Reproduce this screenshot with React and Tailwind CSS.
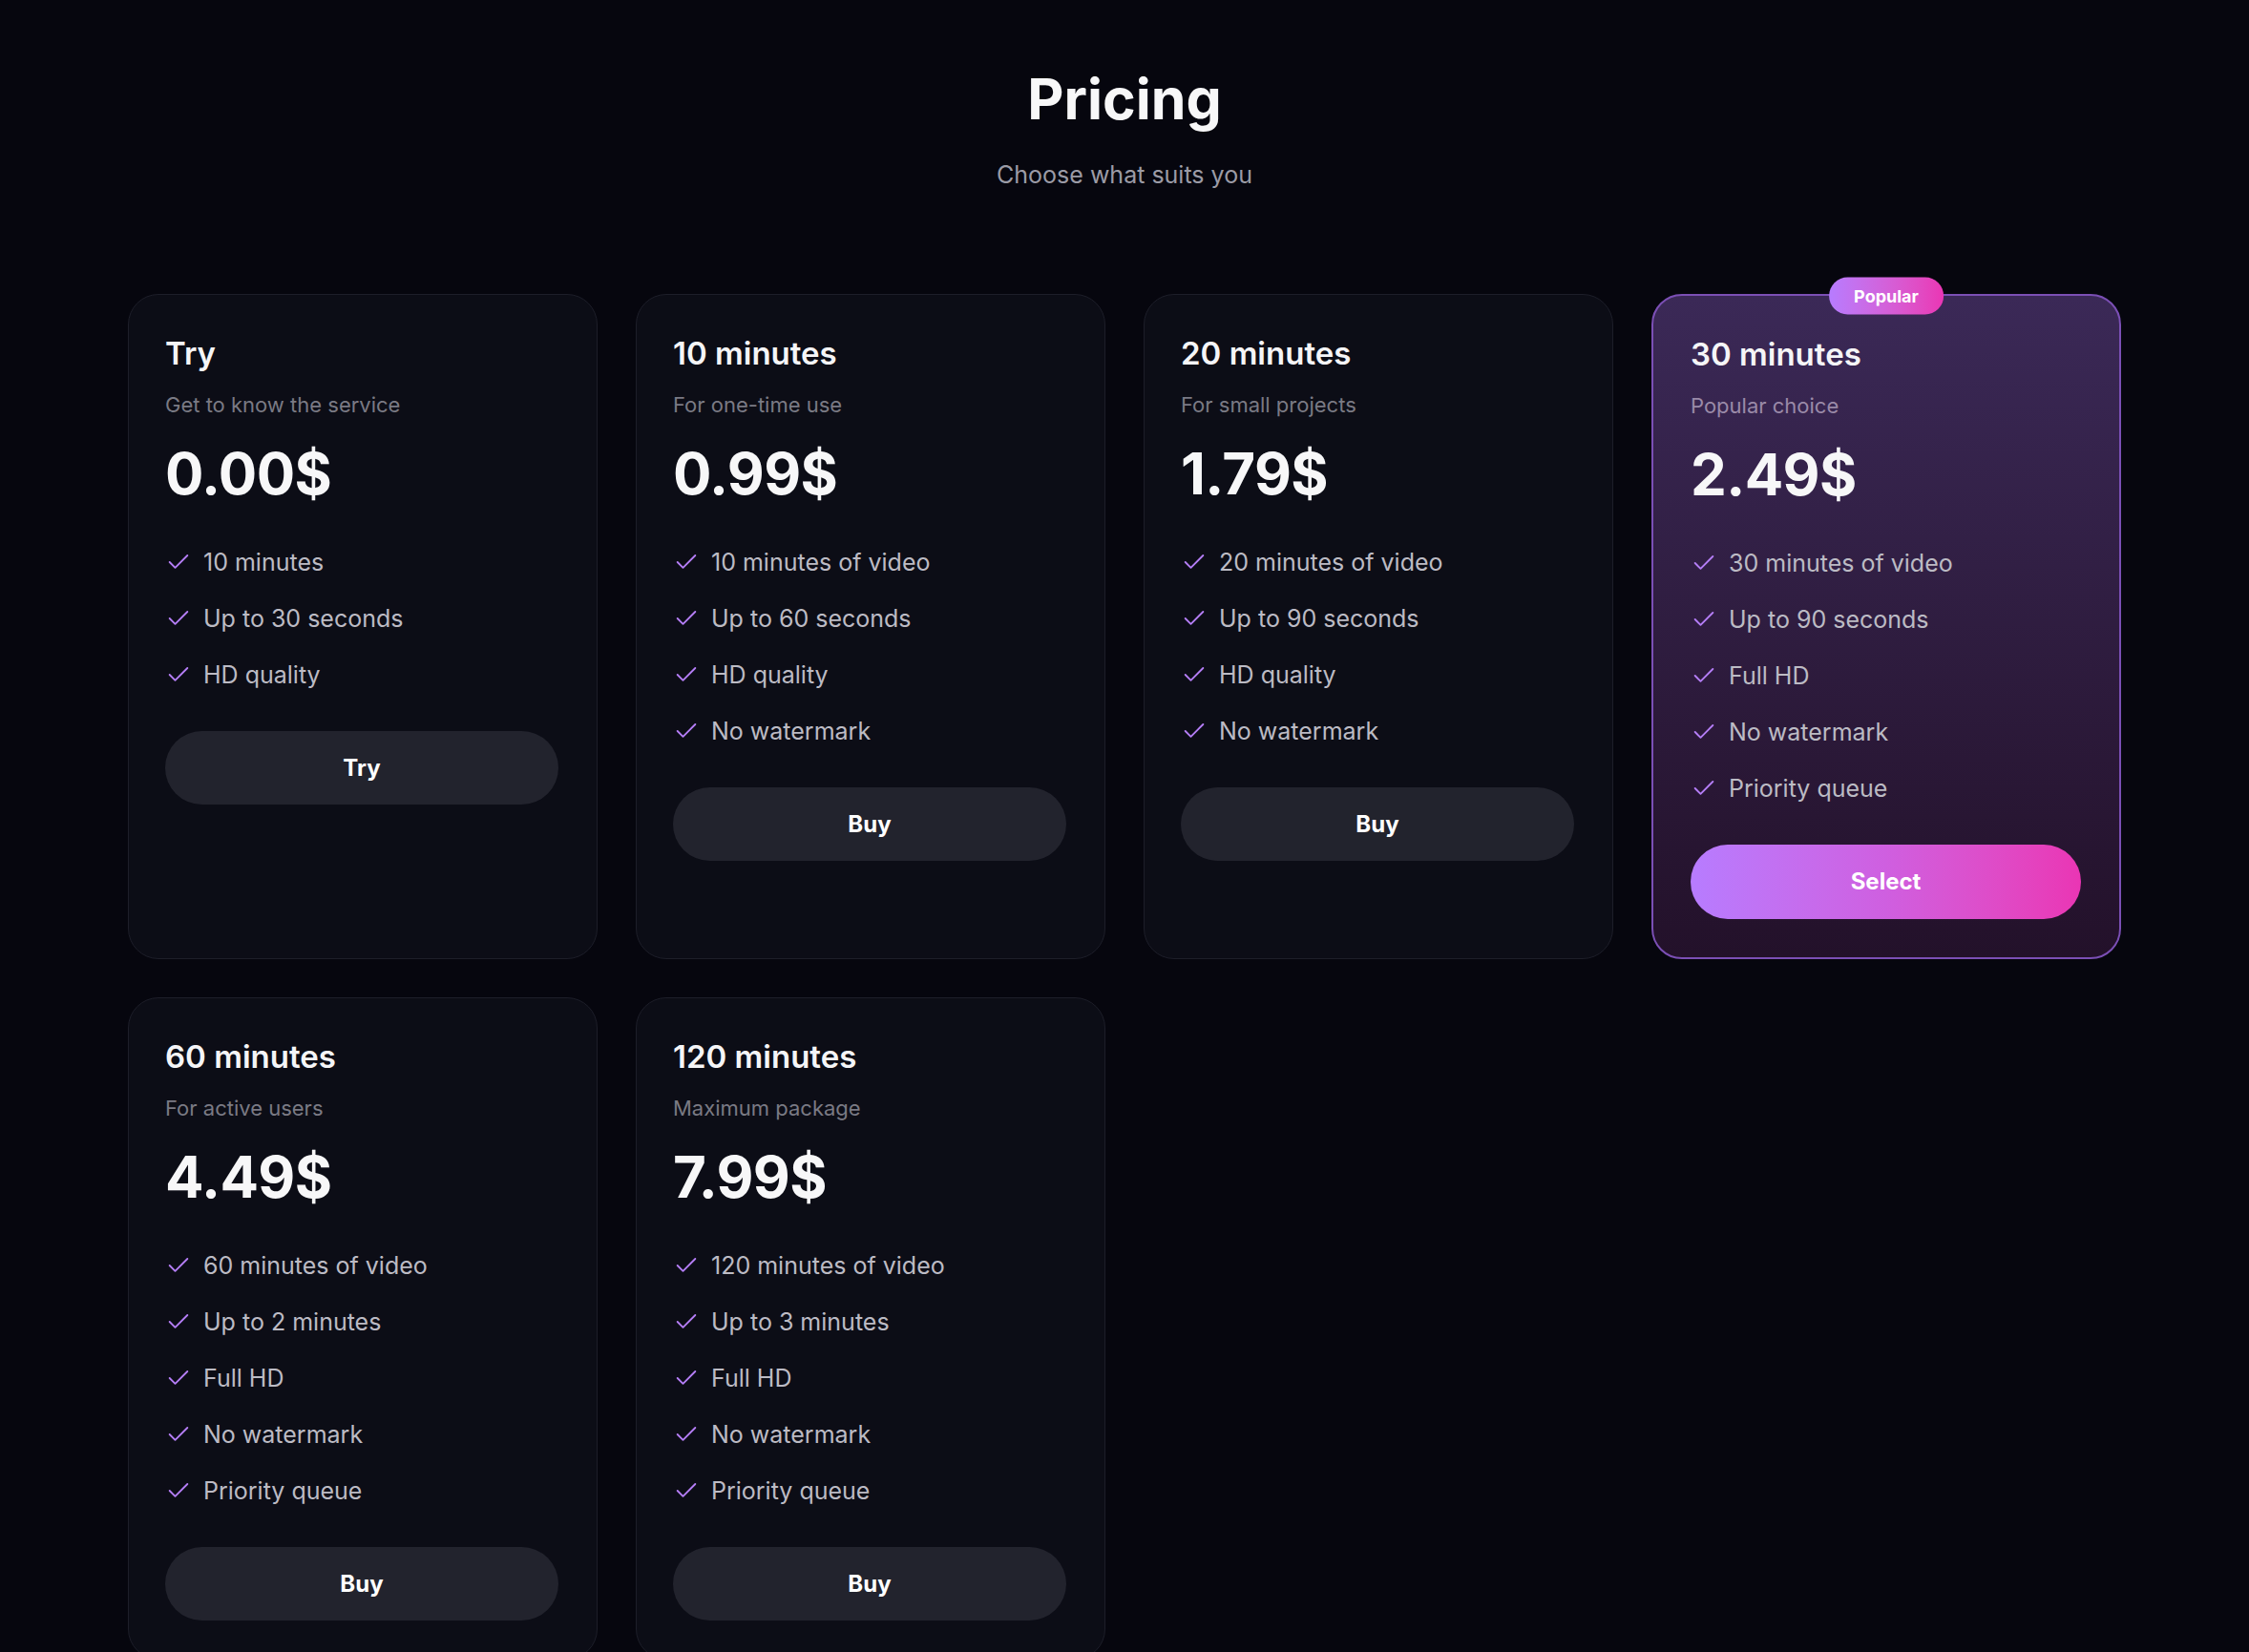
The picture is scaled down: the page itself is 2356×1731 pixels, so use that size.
import React from 'react';
import { Check } from 'lucide-react';

// Pricing plans shown in the grid
const plans = [
  {
    name: 'Try',
    note: 'Get to know the service',
    price: '0.00$',
    features: ['10 minutes', 'Up to 30 seconds', 'HD quality'],
    cta: 'Try',
  },
  {
    name: '10 minutes',
    note: 'For one-time use',
    price: '0.99$',
    features: ['10 minutes of video', 'Up to 60 seconds', 'HD quality', 'No watermark'],
    cta: 'Buy',
  },
  {
    name: '20 minutes',
    note: 'For small projects',
    price: '1.79$',
    features: ['20 minutes of video', 'Up to 90 seconds', 'HD quality', 'No watermark'],
    cta: 'Buy',
  },
  {
    name: '30 minutes',
    note: 'Popular choice',
    price: '2.49$',
    features: ['30 minutes of video', 'Up to 90 seconds', 'Full HD', 'No watermark', 'Priority queue'],
    cta: 'Select',
    popular: true,
  },
  {
    name: '60 minutes',
    note: 'For active users',
    price: '4.49$',
    features: ['60 minutes of video', 'Up to 2 minutes', 'Full HD', 'No watermark', 'Priority queue'],
    cta: 'Buy',
  },
  {
    name: '120 minutes',
    note: 'Maximum package',
    price: '7.99$',
    features: ['120 minutes of video', 'Up to 3 minutes', 'Full HD', 'No watermark', 'Priority queue'],
    cta: 'Buy',
  },
];

const PlanCard = ({ plan }) => {
  const popular = plan.popular;

  return (
    <div
      className={
        popular
          ? 'relative flex flex-col rounded-[32px] border-2 border-[#7b4fb5] bg-gradient-to-b from-[#3b2957] to-[#23112a] pb-10 pl-[39px] pr-10 pt-10'
          : 'relative flex flex-col rounded-[32px] border border-[#1d1e29] bg-[#0c0d16] pb-10 pl-[38px] pr-10 pt-10'
      }
    >
      {/* badge over the top border */}
      {popular && (
        <span className="absolute left-1/2 top-0 -translate-x-1/2 -translate-y-1/2 rounded-full bg-gradient-to-r from-[#b77cff] to-[#ea35b4] px-[26px] text-[18px] font-bold leading-[39px] text-white">
          Popular
        </span>
      )}

      <h3 className="text-[33px] font-semibold leading-[42px] text-[#f5f5f7]">{plan.name}</h3>
      <p className={popular ? 'mt-[19px] text-[22px] leading-[28px] text-[#9a8aa8]' : 'mt-[19px] text-[22px] leading-[28px] text-[#7a7a84]'}>
        {plan.note}
      </p>
      <div className="mt-[28px] text-[60px] font-bold leading-[60px] tracking-[-0.01em] text-[#f7f7f8]">
        {plan.price}
      </div>

      <ul className="mt-[47px] flex flex-col gap-[27px]">
        {plan.features.map((f) => (
          <li key={f} className="flex h-[32px] items-center gap-3 text-[25px] leading-[32px] text-[#bcbbc4]">
            <Check size={28} strokeWidth={1.6} className="shrink-0 text-[#b57ef7]" />
            <span>{f}</span>
          </li>
        ))}
      </ul>

      <button
        className={
          popular
            ? 'mt-[43px] h-[78px] w-full rounded-full bg-gradient-to-r from-[#b77cff] via-[#cf5fe0] to-[#ea35b4] text-[24px] font-bold text-white'
            : 'mt-[43px] h-[77px] w-full rounded-full bg-[#22232d] text-[24px] font-bold text-white'
        }
      >
        {plan.cta}
      </button>
    </div>
  );
};

export default function App() {
  return (
    <div className="min-h-screen bg-[#06060e] pb-16 font-['Inter',sans-serif]">
      <header className="pt-[74px] text-center">
        <h1 className="text-[59px] font-bold leading-[60px] text-[#f7f7f8]">Pricing</h1>
        <p className="mt-[33px] text-[25px] leading-[32px] text-[#9b9ba6]">Choose what suits you</p>
      </header>

      <div className="mx-auto mt-[109px] grid w-[2088px] grid-cols-4 gap-10">
        {plans.map((p) => (
          <PlanCard key={p.name} plan={p} />
        ))}
      </div>
    </div>
  );
}
